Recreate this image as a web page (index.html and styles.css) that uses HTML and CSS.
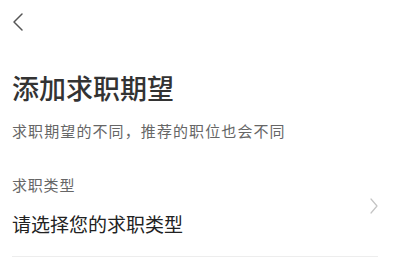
FILE: index.html
```html
<!DOCTYPE html>
<html lang="zh-CN">
<head>
<meta charset="utf-8">
<title>添加求职期望</title>
<link rel="stylesheet" href="styles.css">
</head>
<body>
<div class="page">
  <header class="nav">
    <svg class="back" width="12" height="20" viewBox="0 0 12 20" aria-hidden="true">
      <polyline points="10,2 2,10 10,18" fill="none" stroke="#555" stroke-width="1.5" stroke-linecap="round" stroke-linejoin="round"/>
    </svg>
  </header>
  <h1 class="title">添加求职期望</h1>
  <p class="subtitle">求职期望的不同，推荐的职位也会不同</p>
  <div class="field">
    <div class="field-text">
      <div class="label">求职类型</div>
      <div class="value">请选择您的求职类型</div>
    </div>
    <svg class="arrow" width="8" height="16" viewBox="0 0 8 16" aria-hidden="true">
      <polyline points="1,1 7,8 1,15" fill="none" stroke="#c4c4c4" stroke-width="1.2" stroke-linecap="round" stroke-linejoin="round"/>
    </svg>
  </div>
</div>
</body>
</html>
```

FILE: styles.css
```css
html, body {
  margin: 0;
  padding: 0;
  background: #fff;
}
body {
  font-family: "Noto Sans CJK SC", "Noto Sans", sans-serif;
  color: #222;
}
.page {
  padding: 0 22px 0 12px;
}
.nav {
  height: 44px;
  display: flex;
  align-items: center;
}
.back {
  display: block;
  margin-left: 0;
}
.title {
  margin: 26px 0 0;
  font-size: 27px;
  line-height: 36px;
  font-weight: 500;
  color: #333;
}
.subtitle {
  margin: 15px 0 0;
  font-size: 15px;
  line-height: 20px;
  letter-spacing: 1.1px;
  color: #666;
}
.field {
  margin-top: 34px;
  display: flex;
  justify-content: space-between;
  align-items: flex-start;
  border-bottom: 1px solid #ededed;
}
.label {
  font-size: 15px;
  line-height: 20px;
  letter-spacing: 0.8px;
  color: #666;
}
.value {
  margin-top: 15px;
  padding-bottom: 18px;
  font-size: 19px;
  line-height: 28px;
  color: #222;
}
.arrow {
  display: block;
  margin-top: 23px;
}
```
